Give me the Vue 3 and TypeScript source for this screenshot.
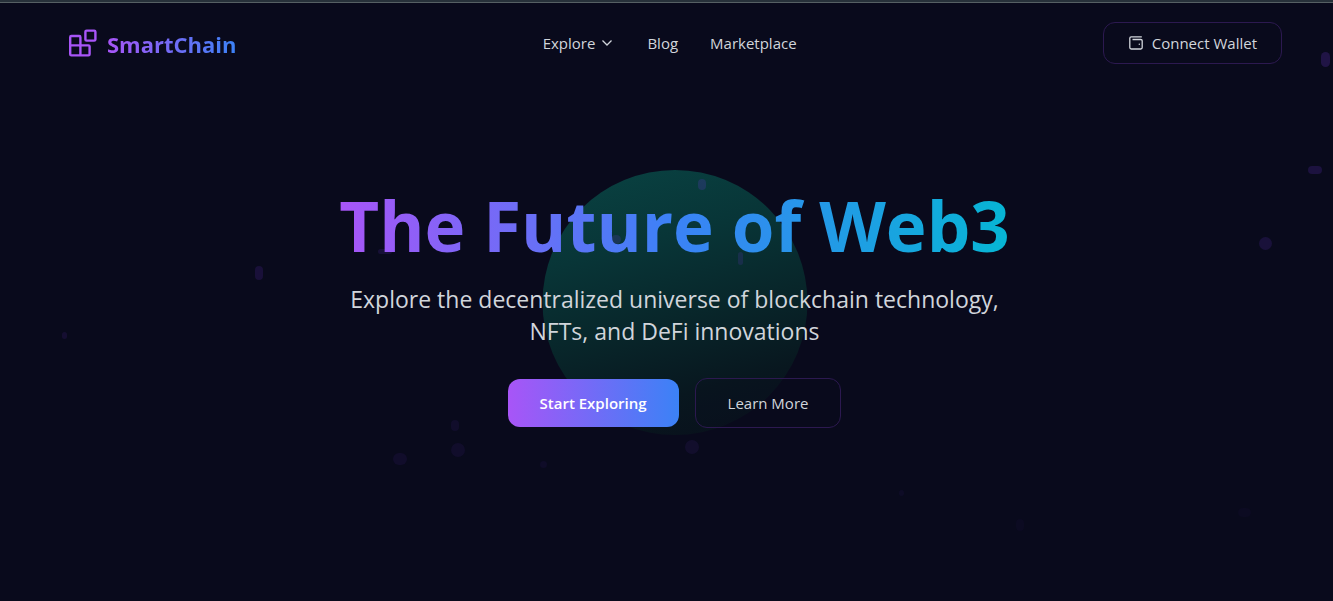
<script setup lang="ts">
interface Particle {
  x: number
  y: number
  w: number
  h: number
  o: number
}

const particles: Particle[] = [
  { x: 1321, y: 52, w: 9, h: 15, o: 0.2 },
  { x: 1308, y: 166, w: 14, h: 8, o: 0.17 },
  { x: 1259, y: 237, w: 13, h: 13, o: 0.15 },
  { x: 698, y: 179, w: 8, h: 11, o: 0.18 },
  { x: 611, y: 235, w: 10, h: 9, o: 0.16 },
  { x: 738, y: 252, w: 5, h: 13, o: 0.14 },
  { x: 378, y: 249, w: 14, h: 5, o: 0.13 },
  { x: 255, y: 266, w: 8, h: 14, o: 0.14 },
  { x: 62, y: 332, w: 5, h: 7, o: 0.1 },
  { x: 451, y: 420, w: 8, h: 11, o: 0.07 },
  { x: 451, y: 443, w: 14, h: 14, o: 0.07 },
  { x: 393, y: 453, w: 14, h: 12, o: 0.07 },
  { x: 540, y: 461, w: 7, h: 7, o: 0.06 },
  { x: 685, y: 440, w: 14, h: 14, o: 0.08 },
  { x: 899, y: 490, w: 5, h: 6, o: 0.05 },
  { x: 1016, y: 519, w: 8, h: 12, o: 0.03 },
  { x: 1238, y: 508, w: 13, h: 9, o: 0.03 },
]

function particleStyle(p: Particle) {
  return {
    left: `${(p.x / 1333) * 100}%`,
    top: `${p.y}px`,
    width: `${p.w}px`,
    height: `${p.h}px`,
    opacity: p.o,
  }
}
</script>

<template>
  <div class="page">
    <div class="orb" aria-hidden="true"></div>
    <div class="particles" aria-hidden="true">
      <span v-for="(p, i) in particles" :key="i" class="particle" :style="particleStyle(p)"></span>
    </div>

    <header class="header">
      <a href="#" class="brand">
        <svg class="brand-icon" viewBox="0 0 32 32" fill="none" stroke="#a855f7" stroke-width="2.4" stroke-linejoin="round" aria-hidden="true">
          <path d="M3.2 10.2q0-1.2 1.2-1.2h7.800q1.200 0 1.200 1.200v8.200h8q1.200 0 1.200 1.200v7.600q0 1.200-1.200 1.200h-17q-1.200 0-1.200-1.200z" />
          <path d="M3.200 18.400h10.200v10" />
          <rect x="18.400" y="3.600" width="10" height="10" rx="1.200" />
        </svg>
        <span class="brand-name">SmartChain</span>
      </a>
      <nav class="nav" aria-label="Main">
        <button type="button" class="nav-item">
          Explore
          <svg class="chevron" viewBox="0 0 16 16" fill="none" stroke="currentColor" stroke-width="1.3" aria-hidden="true">
            <path d="M3.500 5.500 8 10l4.500-4.500" />
          </svg>
        </button>
        <a href="#" class="nav-item">Blog</a>
        <a href="#" class="nav-item">Marketplace</a>
      </nav>
      <button type="button" class="wallet">
        <svg class="wallet-icon" viewBox="0 0 16 16" fill="none" stroke="currentColor" stroke-width="1.3" aria-hidden="true">
          <path d="M13.800 1.800H3.200q-1.400 0-1.400 1.400v9.400q0 1.400 1.400 1.400h9.600q1.400 0 1.400-1.400V5.800q0-1.300-1.400-1.300H4.500" />
          <circle cx="11.300" cy="9.200" r=".7" fill="currentColor" stroke="none" />
        </svg>
        Connect Wallet
      </button>
    </header>

    <main class="hero">
      <h1 class="title">The Future of Web3</h1>
      <p class="subtitle">Explore the decentralized universe of blockchain technology, NFTs, and DeFi innovations</p>
      <div class="actions">
        <button type="button" class="btn primary">Start Exploring</button>
        <button type="button" class="btn outline">Learn More</button>
      </div>
    </main>
  </div>
</template>

<style>
body {
  margin: 0;
  background: #090a1c;
}
</style>

<style scoped>
.page {
  position: relative;
  box-sizing: border-box;
  min-height: 100vh;
  overflow: hidden;
  border-top: 2px solid #27313a;
  background: #090a1c;
  box-shadow: inset 0 1px #566064;
  color: #d1d5db;
  font-family: "Segoe UI", "Open Sans", "Noto Sans", sans-serif;
  font-size: 16px;
  line-height: 24px;
}

button {
  border: 0;
  padding: 0;
  background: none;
  color: inherit;
  font: inherit;
  cursor: pointer;
}

a {
  color: inherit;
  text-decoration: none;
}

.orb {
  position: absolute;
  top: 168px;
  left: calc(50% + 8px);
  width: 265px;
  height: 265px;
  border-radius: 50%;
  background: linear-gradient(165deg, #094343 0%, #083537 30%, #08262a 55%, #08171f 78%, #090f1b 100%);
  transform: translateX(-50%);
}

.particles {
  position: absolute;
  inset: -2px 0 0;
}

.particle {
  position: absolute;
  border-radius: 7px;
  background: #7c3aed;
}

.header {
  position: relative;
  display: flex;
  align-items: center;
  justify-content: space-between;
  height: 82px;
  padding: 0 51px 0 67px;
}

.brand {
  display: flex;
  align-items: center;
  gap: 8px;
}

.brand-icon {
  width: 32px;
  height: 32px;
}

.brand-name {
  padding-top: 2px;
  background: linear-gradient(90deg, #a855f7, #3b82f6);
  background-clip: text;
  color: transparent;
  font-size: 22px;
  font-weight: 700;
  line-height: 32px;
}

.nav {
  display: flex;
  gap: 32px;
}

.nav-item {
  display: flex;
  align-items: center;
  gap: 4px;
  font-size: 15px;
}

.chevron,
.wallet-icon {
  width: 16px;
  height: 16px;
}

.wallet {
  display: flex;
  align-items: center;
  gap: 8px;
  padding: 8px 24px;
  border: 1px solid #2c1950;
  border-radius: 12px;
  font-size: 15px;
}

.hero {
  position: relative;
  display: flex;
  flex-direction: column;
  align-items: center;
  padding: 105px 24px 48px 40px;
  text-align: center;
}

.title {
  margin: 0 0 22px;
  background: linear-gradient(90deg, #a855f7, #3b82f6 50%, #06b6d4);
  background-clip: text;
  color: transparent;
  font-size: 69px;
  font-weight: 700;
  line-height: 72px;
}

.subtitle {
  max-width: 672px;
  margin: 0 0 31px;
  font-size: 23px;
  line-height: 32px;
}

.actions {
  display: flex;
  align-items: center;
  gap: 16px;
}

.btn {
  padding: 12px 32px;
  border-radius: 12px;
  font-size: 15px;
}

.primary {
  background: linear-gradient(90deg, #a855f7, #3b82f6);
  color: #ffffff;
  font-weight: 600;
}

.outline {
  border: 1px solid #2c1950;
  background: rgba(10, 10, 28, 0.2);
}
</style>
